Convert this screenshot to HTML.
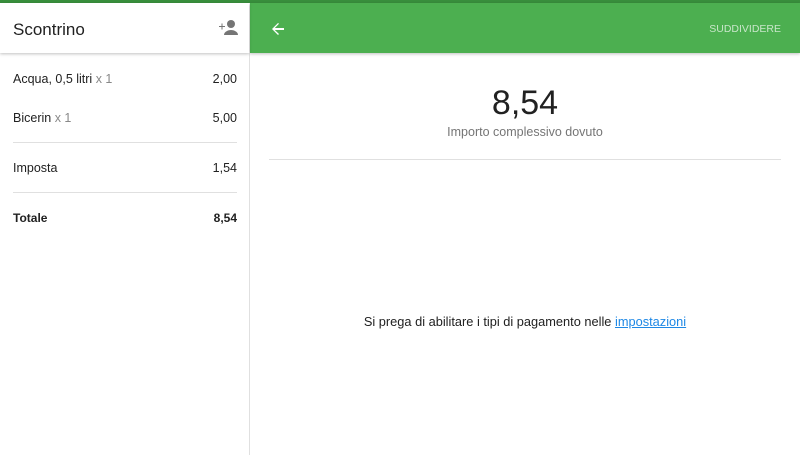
<!DOCTYPE html><html><head><style>
body{margin:0;width:800px;height:455px;overflow:hidden;background:#fff;font-family:"Liberation Sans",sans-serif;position:relative;color:#212121}
.a{position:absolute}
</style></head><body>
<div class="a" style="left:0;top:0;width:800px;height:3px;background:#388e3c"></div>
<div class="a" style="left:250px;top:3px;width:550px;height:50px;background:#4caf50;box-shadow:0 1px 3px rgba(0,0,0,.25)"></div>
<div class="a" style="left:0;top:3px;width:249px;height:50px;background:#fff;box-shadow:0 1px 3px rgba(0,0,0,.25);z-index:2"></div>
<div class="a" style="left:249px;top:53px;width:1px;height:402px;background:#e0e0e0"></div>
<div class="a" style="left:13px;top:20px;font-size:17px;z-index:3">Scontrino</div>
<svg class="a" style="left:218px;top:19px;z-index:3" width="20" height="17" viewBox="0 0 20 17"><path d="M1 7h2.5V4.5h1V7H7v1H4.5v2.5h-1V8H1z" fill="#757575"/><circle cx="13" cy="5" r="4" fill="#757575"/><path d="M6 16c0-3.5 4.5-5 7-5s7 1.5 7 5z" fill="#757575"/></svg>
<svg class="a" style="left:270px;top:21px" width="16" height="16" viewBox="0 0 16 16"><path d="M14 7H4.8l4.2-4.2L8 2 2 8l6 6 1-1-4.2-4H14z" fill="#fff"/></svg>
<div class="a" style="right:19px;top:23px;font-size:10.5px;color:#c8e6c9">SUDDIVIDERE</div>
<div class="a" style="left:13px;top:72px;font-size:12.5px">Acqua, 0,5 litri <span style="color:#888">x 1</span></div>
<div class="a" style="right:563px;top:72px;font-size:12.5px">2,00</div>
<div class="a" style="left:13px;top:111px;font-size:12.5px">Bicerin <span style="color:#888">x 1</span></div>
<div class="a" style="right:563px;top:111px;font-size:12.5px">5,00</div>
<div class="a" style="left:13px;top:142px;width:224px;height:1px;background:#e0e0e0"></div>
<div class="a" style="left:13px;top:161px;font-size:12.5px">Imposta</div>
<div class="a" style="right:563px;top:161px;font-size:12.5px">1,54</div>
<div class="a" style="left:13px;top:192px;width:224px;height:1px;background:#e0e0e0"></div>
<div class="a" style="left:13px;top:211px;font-size:12px;font-weight:bold">Totale</div>
<div class="a" style="right:563px;top:211px;font-size:12px;font-weight:bold">8,54</div>
<div class="a" style="left:250px;width:550px;top:84px;text-align:center;font-size:34px">8,54</div>
<div class="a" style="left:250px;width:550px;top:125px;text-align:center;font-size:12.5px;color:#757575">Importo complessivo dovuto</div>
<div class="a" style="left:269px;top:159px;width:512px;height:1px;background:#e0e0e0"></div>
<div class="a" style="left:250px;width:550px;top:314px;text-align:center;font-size:12.8px">Si prega di abilitare i tipi di pagamento nelle <span style="color:#1e88e5;text-decoration:underline">impostazioni</span></div>
</body></html>
